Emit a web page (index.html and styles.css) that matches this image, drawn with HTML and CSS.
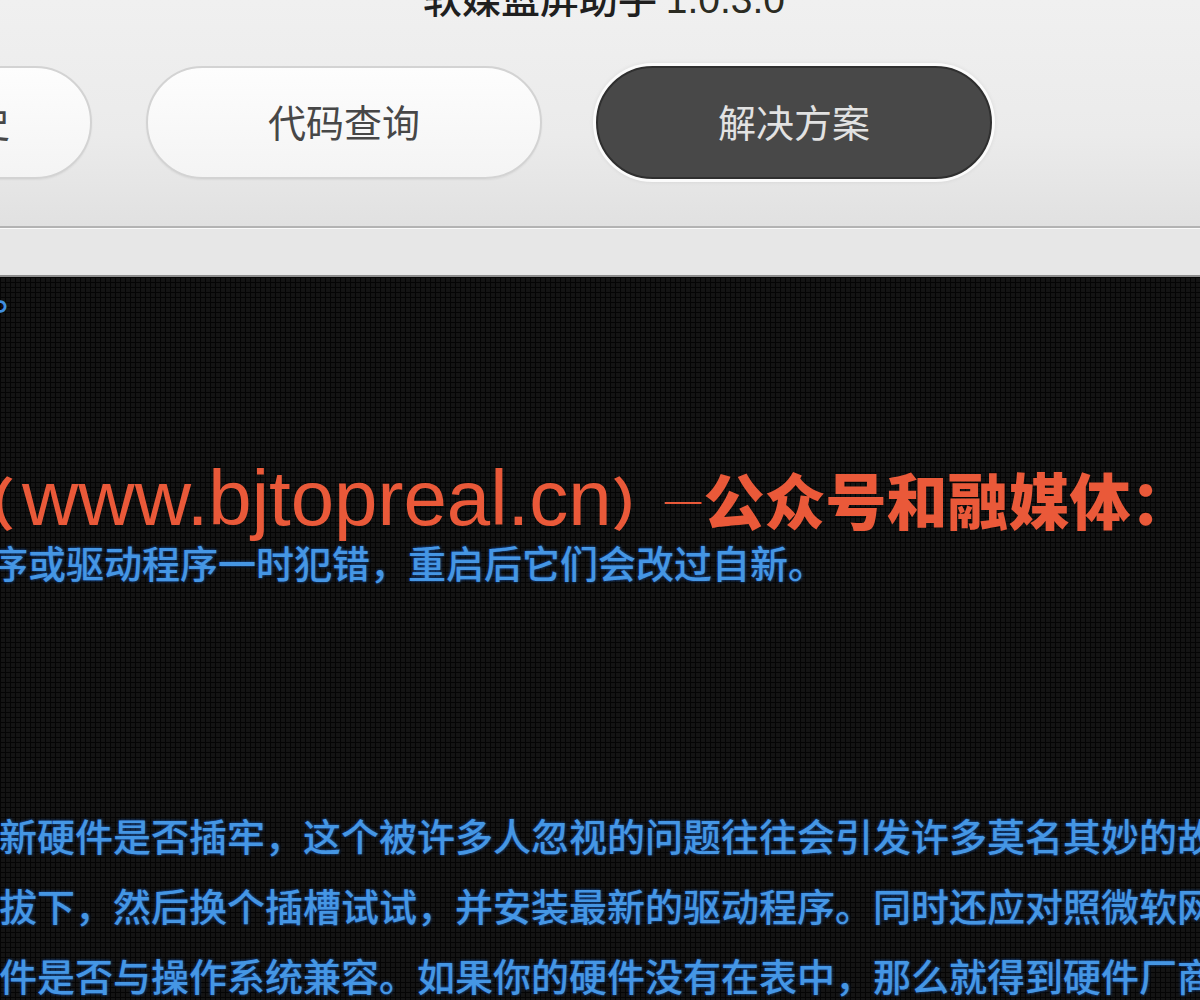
FILE: index.html
```html
<!DOCTYPE html>
<html lang="zh-CN">
<head>
<meta charset="utf-8">
<title>软媒蓝屏助手 1.0.3.0</title>
<link rel="stylesheet" href="styles.css">
</head>
<body>
<div class="app">
  <header class="header">
    <div class="title"><span class="title-cn">软媒蓝屏助手</span> <span class="title-ver">1.0.3.0</span></div>
    <nav class="tabs">
      <div class="tab tab-first"><span class="tab-label">蓝屏历史</span></div>
      <div class="tab"><span class="tab-label">代码查询</span></div>
      <div class="tab tab-active"><span class="tab-label">解决方案</span></div>
    </nav>
  </header>
  <div class="subbar"></div>
  <main class="screen">
    <p class="line line-top">可能的原因。</p>
    <p class="line line-red"><span class="paren-l">（</span><span class="url">www.bjtopreal.cn</span><span class="paren-r">）</span><span class="dash">—</span><span class="red-cn">公众号和融媒体：</span></p>
    <p class="line line-blue line-shift">序或驱动程序一时犯错，重启后它们会改过自新。</p>
    <div class="para">
      <p class="line line-blue">新硬件是否插牢，这个被许多人忽视的问题往往会引发许多莫名其妙的故障。</p>
      <p class="line line-blue">拔下，然后换个插槽试试，并安装最新的驱动程序。同时还应对照微软网站的硬件兼容列表</p>
      <p class="line line-blue">件是否与操作系统兼容。如果你的硬件没有在表中，那么就得到硬件厂商网站进行查询。</p>
    </div>
  </main>
</div>
</body>
</html>
```
FILE: styles.css
```css
* { box-sizing: border-box; }
html, body {
  margin: 0;
  padding: 0;
  width: 1200px;
  height: 1000px;
  overflow: hidden;
  background: #0c0c0c;
}
.app {
  width: 1200px;
  height: 1000px;
  display: flex;
  flex-direction: column;
  overflow: hidden;
  font-family: "Noto Sans CJK SC", sans-serif;
}
.header {
  background: linear-gradient(#f0f0f0, #ebebeb 60%, #e1e1e1);
  padding-bottom: 47px;
  border-bottom: 2px solid #b3b3b3;
  overflow: hidden;
  height: 228px;
}
.title {
  margin-top: -23px;
  height: 39px;
  font-size: 39px;
  line-height: 39px;
  text-align: center;
  padding-left: 8px;
  white-space: nowrap;
  color: #1f1f1f;
}
.title-cn {
  font-family: "Noto Sans CJK SC", sans-serif;
  font-weight: 500;
}
.title-ver {
  font-family: "Liberation Sans", "Noto Sans CJK SC", sans-serif;
  color: #2b2b22;
}
.tabs {
  margin-top: 50px;
  display: flex;
  gap: 54px;
  margin-left: -304px;
}
.tab {
  flex: 0 0 396px;
  height: 113px;
  border-radius: 57px;
  border: 2px solid #d3d3d3;
  background: linear-gradient(#fdfdfd, #f4f4f4);
  display: flex;
  align-items: center;
  justify-content: center;
  font-size: 38px;
  color: #474747;
  box-shadow: 0 1px 2px rgba(0,0,0,0.06);
}
.tab-label { line-height: 1; padding-bottom: 4px; }
.tab-first {
  justify-content: flex-end;
  padding-right: 80px;
}
.tab-active {
  background: #484848;
  border-color: #2f2f2f;
  color: #e2e2e2;
  box-shadow: 0 0 0 3px #fbfbfb, 0 0 4px 3px rgba(0,0,0,0.08);
}
.subbar {
  flex: 0 0 49px;
  background: #e7e7e7;
  border-top: 1px solid #fafafa;
  border-bottom: 2px solid #8c8c8c;
}
.screen {
  flex: 1;
  background-color: #141414;
  background-image:
    linear-gradient(90deg, #050505 1px, transparent 1px),
    linear-gradient(#050505 1px, transparent 1px);
  background-size: 5px 5px;
  overflow: hidden;
}
.line {
  margin: 0;
  white-space: nowrap;
  overflow: visible;
}
.line-top {
  margin-top: -4px;
  height: 40px;
  font-size: 38px;
  line-height: 40px;
  color: #3f8fe0;
  font-weight: 700;
  text-indent: -197px;
}
.line-red {
  margin-top: 148px;
  height: 70px;
  line-height: 70px;
  font-size: 57px;
  color: #ea5939;
  margin-left: -42px;
}
.paren-l {
  font-weight: 700;
  letter-spacing: 7px;
}
.paren-r {
  font-weight: 700;
  letter-spacing: -6px;
}
.url {
  font-family: "Liberation Sans", sans-serif;
  font-size: 78px;
}
.dash {
  font-size: 46px;
  font-weight: 300;
  vertical-align: 0.2em;
}
.red-cn {
  font-size: 61px;
  font-weight: 900;
}
.line-blue {
  font-size: 38px;
  font-weight: 500;
  color: #4596e4;
  text-shadow: 0 0 3px rgba(25, 105, 215, 0.85);
}
.line-shift {
  margin-top: 11px;
  height: 40px;
  line-height: 40px;
  margin-left: -10px;
}
.para {
  margin-top: 218px;
}
.para .line-blue {
  height: 70px;
  line-height: 70px;
  margin-left: -1px;
}
```
